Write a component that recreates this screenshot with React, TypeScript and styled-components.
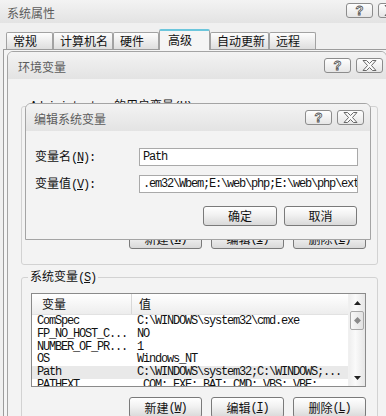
import React from "react";
import styled, { createGlobalStyle } from "styled-components";

const CJK = `"Noto Sans CJK SC", "Noto Sans CJK JP", sans-serif`;
const MONO = `"Liberation Mono", "Noto Sans CJK SC", monospace`;

const GlobalStyle = createGlobalStyle`
  html, body {
    margin: 0;
    padding: 0;
    background: #f0f0f0;
  }
  * {
    box-sizing: border-box;
  }
`;

const Desktop = styled.div`
  position: relative;
  width: 386px;
  height: 416px;
  overflow: hidden;
  background: #f0f0f0;
  font-family: ${CJK};
  font-size: 12px;
  color: #111;
`;

const Window = styled.div`
  width: 406px;
  height: 416px;
  display: flex;
  flex-direction: column;
  background: #f0f0f0;
`;

const TitleBar = styled.div<{ $h: number; $pl: number; $pr: number }>`
  flex: none;
  height: ${(p) => p.$h}px;
  display: flex;
  align-items: center;
  justify-content: space-between;
  padding: 0 ${(p) => p.$pr}px 0 ${(p) => p.$pl}px;
  background: linear-gradient(#f3f3f3, #e3e3e3);
`;

const TitleText = styled.span<{ $drop?: number }>`
  color: #5c5c5c;
  font-size: 12px;
  line-height: 14px;
  margin-top: ${(p) => p.$drop ?? 0}px;
`;

const CapGroup = styled.div<{ $lift?: number }>`
  display: flex;
  gap: 5px;
  margin-bottom: ${(p) => p.$lift ?? 0}px;
`;

const CapBtn = styled.div`
  width: 27px;
  height: 15px;
  border: 1px solid #8c8c8c;
  border-radius: 3px;
  background: linear-gradient(#fefefe, #e6e6e6);
  display: flex;
  align-items: center;
  justify-content: center;
`;

const HelpGlyph = styled.span`
  font-family: "Liberation Sans", sans-serif;
  font-weight: bold;
  font-size: 13px;
  line-height: 1;
  color: #fafafa;
  -webkit-text-stroke: 0.8px #555;
`;

const TabStrip = styled.div`
  flex: none;
  height: 26px;
  display: flex;
  align-items: flex-end;
  padding-left: 6px;
  position: relative;
  z-index: 1;
`;

const Tab = styled.div<{ $w: number; $active?: boolean }>`
  width: ${(p) => p.$w}px;
  height: ${(p) => (p.$active ? 21 : 17)}px;
  margin-bottom: ${(p) => (p.$active ? -1 : 0)}px;
  padding: ${(p) => (p.$active ? "2px 0 0 8px" : "1px 0 0 6px")};
  border: 1px solid #a2a2a2;
  border-bottom: none;
  border-top: ${(p) => (p.$active ? "2px solid #6cc6dc" : "1px solid #a2a2a2")};
  border-radius: 2px 2px 0 0;
  background: ${(p) => (p.$active ? "#f5f5f5" : "linear-gradient(#fdfdfd, #dedede)")};
  line-height: 14px;
  white-space: nowrap;
`;

const Panel = styled.div`
  flex: 1;
  margin-left: 3px;
  border: 1px solid #9c9c9c;
  border-bottom: none;
  background: #f5f5f5;
`;

const Dialog = styled.div<{ $x: number; $y: number; $w: number; $h: number }>`
  position: absolute;
  left: ${(p) => p.$x}px;
  top: ${(p) => p.$y}px;
  width: ${(p) => p.$w}px;
  height: ${(p) => p.$h}px;
  display: flex;
  flex-direction: column;
  border: 1px solid #a4a4a4;
  border-radius: 6px 6px 0 0;
  overflow: hidden;
  background: #f3f3f3;
  z-index: 2;
`;

const EnvBody = styled.div`
  flex: 1;
  padding: 19px 8px 0 13px;
  display: flex;
  flex-direction: column;
`;

const Group = styled.fieldset<{ $mt: number; $pt: number; $pb: number }>`
  margin: ${(p) => p.$mt}px 0 0 0;
  padding: ${(p) => p.$pt}px 11px ${(p) => p.$pb}px 9px;
  border: 1px solid #d2d2d2;
  border-radius: 3px;
  min-width: 0;
  display: flex;
  flex-direction: column;
`;

const Legend = styled.legend`
  padding: 0 2px;
  margin-left: -3px;
  line-height: 14px;
  white-space: nowrap;
`;

const Latin = styled.span`
  font-family: ${MONO};
  font-size: 12px;
  letter-spacing: -1.2px;
`;

const Mn = ({ k, tail = "" }: { k: string; tail?: string }) => (
  <Latin>
    (<u>{k}</u>){tail}
  </Latin>
);

const ListBox = styled.div<{ $h: number }>`
  height: ${(p) => p.$h}px;
  flex: none;
  border: 1px solid #8a8a8a;
  background: #fff;
  display: flex;
  overflow: hidden;
`;

const ListMain = styled.div`
  flex: 1;
  display: flex;
  flex-direction: column;
  min-width: 0;
`;

const HeaderRow = styled.div`
  flex: none;
  height: 21px;
  display: grid;
  grid-template-columns: 100px 1fr;
  background: linear-gradient(#ffffff, #ededed);
  border-bottom: 1px solid #e2e2e2;
`;

const HeaderCell = styled.div<{ $pl: number; $divider?: boolean }>`
  padding-left: ${(p) => p.$pl}px;
  line-height: 20px;
  border-right: ${(p) => (p.$divider ? "1px solid #d8d8d8" : "none")};
`;

const Row = styled.div<{ $sel?: boolean }>`
  flex: none;
  height: 12.8px;
  display: grid;
  grid-template-columns: 100px 1fr;
  background: ${(p) => (p.$sel ? "#e9e9e9" : "transparent")};
`;

const Cell = styled.div`
  padding-left: 5px;
  font-family: ${MONO};
  font-size: 12px;
  letter-spacing: -1.2px;
  line-height: 13px;
  white-space: nowrap;
  overflow: hidden;
`;

const ScrollBar = styled.div`
  width: 17px;
  flex: none;
  display: flex;
  flex-direction: column;
  background: linear-gradient(90deg, #eeeeee, #fafafa 40%, #e6e6e6);
  border-left: 1px solid #f0f0f0;
`;

const ScrollArrow = styled.div`
  height: 17px;
  flex: none;
  display: flex;
  align-items: center;
  justify-content: center;
`;

const Thumb = styled.div`
  height: 19px;
  flex: none;
  margin: 0 1px;
  border: 1px solid #a8a8a8;
  border-radius: 2px;
  background: linear-gradient(90deg, #f8f8f8, #e2e2e2);
  display: flex;
  align-items: center;
  justify-content: center;
`;

const Track = styled.div`
  flex: 1;
`;

const ButtonRow = styled.div<{ $mt: number; $gap: number; $mr?: number }>`
  display: flex;
  justify-content: flex-end;
  gap: ${(p) => p.$gap}px;
  margin-top: ${(p) => p.$mt}px;
  margin-right: ${(p) => p.$mr ?? 0}px;
`;

const Button = styled.div<{ $w: number; $h?: number }>`
  width: ${(p) => p.$w}px;
  height: ${(p) => p.$h ?? 21}px;
  border: 1px solid #7a7a7a;
  border-radius: 3px;
  background: linear-gradient(#ffffff, #f1f1f1 45%, #d9d9d9);
  display: flex;
  align-items: center;
  justify-content: center;
  line-height: 14px;
  white-space: nowrap;
`;

const EditBody = styled.div`
  flex: 1;
  padding: 17px 11px 0 9px;
  display: flex;
  flex-direction: column;
`;

const FieldGrid = styled.div`
  display: grid;
  grid-template-columns: 104px 219px;
  row-gap: 9px;
  align-items: center;
`;

const FieldLabel = styled.div`
  line-height: 14px;
  white-space: nowrap;
`;

const Input = styled.div`
  height: 18px;
  border: 1px solid #a9a9a9;
  background: #fff;
  padding-left: 3px;
  font-family: ${MONO};
  font-size: 12px;
  letter-spacing: -1.2px;
  line-height: 16px;
  white-space: nowrap;
  overflow: hidden;
`;

const CloseIcon = () => (
  <svg width="15" height="11" viewBox="0 0 15 11">
    <polygon
      points="1,0.5 4.5,0.5 7.5,3.5 10.5,0.5 14,0.5 9.5,5.5 14,10.5 10.5,10.5 7.5,7.5 4.5,10.5 1,10.5 5.5,5.5"
      fill="#fafafa"
      stroke="#5a5a5a"
      strokeWidth="0.9"
      strokeLinejoin="round"
    />
  </svg>
);

const Caption = ({ close = true }: { close?: boolean }) => (
  <>
    <CapBtn>
      <HelpGlyph>?</HelpGlyph>
    </CapBtn>
    {close && (
      <CapBtn>
        <CloseIcon />
      </CapBtn>
    )}
  </>
);

const Arrow = ({ up }: { up?: boolean }) => (
  <svg width="7" height="4" viewBox="0 0 7 4">
    <polygon points={up ? "3.5,0 7,4 0,4" : "0,0 7,0 3.5,4"} fill="#222" />
  </svg>
);

const Grip = () => (
  <svg width="7" height="7" viewBox="0 0 7 7">
    <polygon points="3.5,0 7,3.5 3.5,7 0,3.5" fill="#8a8a8a" />
  </svg>
);

const tabs = [
  { label: "常规", w: 47 },
  { label: "计算机名", w: 60 },
  { label: "硬件", w: 46 },
  { label: "高级", w: 51, active: true },
  { label: "自动更新", w: 59 },
  { label: "远程", w: 47 },
];

const sysVars: [string, string][] = [
  ["ComSpec", "C:\\WINDOWS\\system32\\cmd.exe"],
  ["FP_NO_HOST_C...", "NO"],
  ["NUMBER_OF_PR...", "1"],
  ["OS", "Windows_NT"],
  ["Path", "C:\\WINDOWS\\system32;C:\\WINDOWS;..."],
  ["PATHEXT", ".COM;.EXE;.BAT;.CMD;.VBS;.VBE;..."],
];

const ButtonTrio = ({ mt }: { mt: number }) => (
  <ButtonRow $mt={mt} $gap={9}>
    <Button $w={73}>
      新建<Mn k="W" />
    </Button>
    <Button $w={73}>
      编辑<Mn k="I" />
    </Button>
    <Button $w={73}>
      删除<Mn k="L" />
    </Button>
  </ButtonRow>
);

export default function App() {
  return (
    <Desktop>
      <GlobalStyle />
      <Window>
        <TitleBar $h={23} $pl={7} $pr={1}>
          <TitleText $drop={2}>系统属性</TitleText>
          <CapGroup $lift={2}>
            <Caption />
          </CapGroup>
        </TitleBar>
        <TabStrip>
          {tabs.map((t) => (
            <Tab key={t.label} $w={t.w} $active={t.active}>
              {t.label}
            </Tab>
          ))}
        </TabStrip>
        <Panel />
      </Window>

      <Dialog $x={7} $y={51} $w={380} $h={380}>
        <TitleBar $h={27} $pl={10} $pr={3}>
          <TitleText $drop={2}>环境变量</TitleText>
          <CapGroup>
            <Caption />
          </CapGroup>
        </TitleBar>
        <EnvBody>
          <Group $mt={0} $pt={8} $pb={15}>
            <Legend>
              <Latin>Administrator </Latin>的用户变量<Mn k="U" />
            </Legend>
            <ListBox $h={96} />
            <ButtonTrio mt={10} />
          </Group>
          <Group $mt={4} $pt={8} $pb={20}>
            <Legend>
              系统变量<Mn k="S" />
            </Legend>
            <ListBox $h={94}>
              <ListMain>
                <HeaderRow>
                  <HeaderCell $pl={10} $divider>
                    变量
                  </HeaderCell>
                  <HeaderCell $pl={7}>值</HeaderCell>
                </HeaderRow>
                {sysVars.map(([name, value]) => (
                  <Row key={name} $sel={name === "Path"}>
                    <Cell>{name}</Cell>
                    <Cell>{value}</Cell>
                  </Row>
                ))}
              </ListMain>
              <ScrollBar>
                <ScrollArrow>
                  <Arrow up />
                </ScrollArrow>
                <Thumb>
                  <Grip />
                </Thumb>
                <Track />
                <ScrollArrow>
                  <Arrow />
                </ScrollArrow>
              </ScrollBar>
            </ListBox>
            <ButtonTrio mt={10} />
          </Group>
        </EnvBody>
      </Dialog>

      <Dialog $x={25} $y={103} $w={346} $h={137}>
        <TitleBar $h={27} $pl={8} $pr={6}>
          <TitleText $drop={2}>编辑系统变量</TitleText>
          <CapGroup>
            <Caption />
          </CapGroup>
        </TitleBar>
        <EditBody>
          <FieldGrid>
            <FieldLabel>
              变量名<Mn k="N" tail=":" />
            </FieldLabel>
            <Input>Path</Input>
            <FieldLabel>
              变量值<Mn k="V" tail=":" />
            </FieldLabel>
            <Input>.em32\Wbem;E:\web\php;E:\web\php\ext</Input>
          </FieldGrid>
          <ButtonRow $mt={13} $gap={7} $mr={2}>
            <Button $w={74} $h={20}>
              确定
            </Button>
            <Button $w={73} $h={20}>
              取消
            </Button>
          </ButtonRow>
        </EditBody>
      </Dialog>
    </Desktop>
  );
}
